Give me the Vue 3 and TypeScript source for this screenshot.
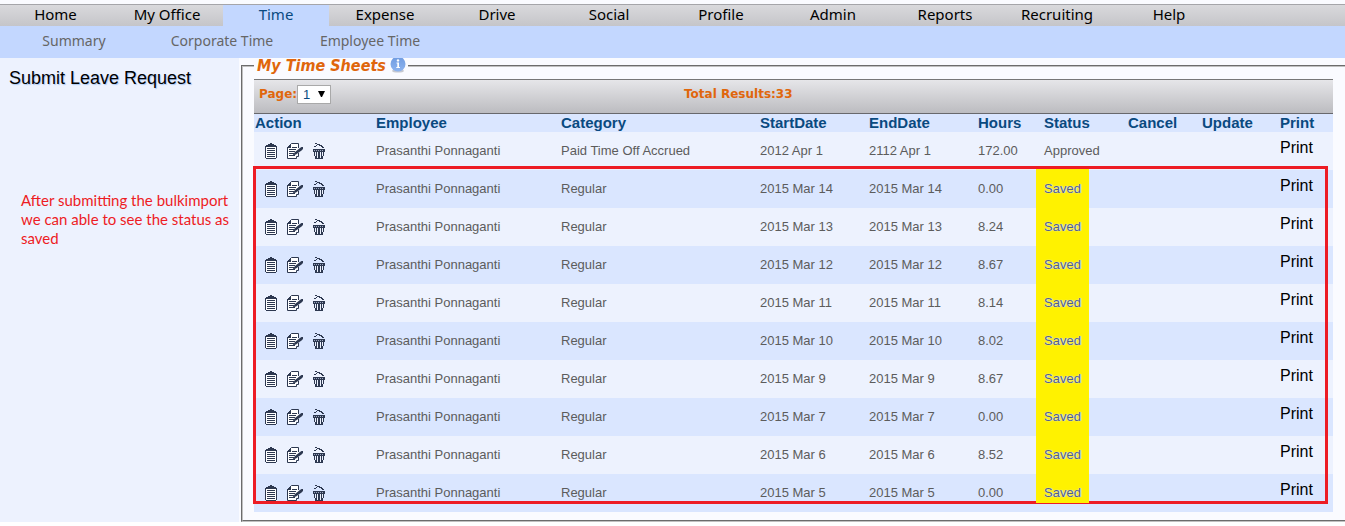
<script setup lang="ts">
import { ref } from 'vue'

interface TimeSheet {
  employee: string
  category: string
  start: string
  end: string
  hours: string
  status: string
}

const modules: string[] = [
  'Home', 'My Office', 'Time', 'Expense', 'Drive', 'Social',
  'Profile', 'Admin', 'Reports', 'Recruiting', 'Help',
]
const sections: string[] = ['Summary', 'Corporate Time', 'Employee Time']
const headings: string[] = [
  'Action', 'Employee', 'Category', 'StartDate', 'EndDate',
  'Hours', 'Status', 'Cancel', 'Update', 'Print',
]

const saved: [string, string][] = [
  ['14', '0.00'], ['13', '8.24'], ['12', '8.67'], ['11', '8.14'], ['10', '8.02'],
  ['9', '8.67'], ['7', '0.00'], ['6', '8.52'], ['5', '0.00'],
]

const employee = 'Prasanthi Ponnaganti'
const rows: TimeSheet[] = [
  { employee, category: 'Paid Time Off Accrued', start: '2012 Apr 1', end: '2112 Apr 1', hours: '172.00', status: 'Approved' },
  ...saved.map(([day, hours]) => ({
    employee,
    category: 'Regular',
    start: `2015 Mar ${day}`,
    end: `2015 Mar ${day}`,
    hours,
    status: 'Saved',
  })),
]

const page = ref('1')
</script>

<template>
  <div class="screen">
    <nav class="modules" aria-label="Modules">
      <a v-for="m in modules" :key="m" href="#" :class="{ active: m === 'Time' }">{{ m }}</a>
    </nav>
    <nav class="sections" aria-label="Time">
      <a v-for="s in sections" :key="s" href="#">{{ s }}</a>
    </nav>

    <div class="body">
      <aside class="sidebar">
        <a class="leave" href="#">Submit Leave Request</a>
        <p class="note">After submitting the bulkimport we can able to see the status as saved</p>
      </aside>

      <main class="content">
        <fieldset class="panel">
          <legend>
            My Time Sheets
            <svg class="info" viewBox="0 0 16 16" aria-hidden="true">
              <defs>
                <linearGradient id="info-fill" x1="0" y1="0" x2="0" y2="1">
                  <stop offset="0" stop-color="#6f9be0" />
                  <stop offset="1" stop-color="#8db4f0" />
                </linearGradient>
              </defs>
              <ellipse cx="8" cy="13" rx="6" ry="1.6" fill="#c5c8d0" />
              <circle cx="8" cy="6" r="7.5" fill="url(#info-fill)" />
              <circle cx="8" cy="2.4" r="1.2" fill="#fff" />
              <path d="M6.5 4.5H9V9h1v1H6.3V9h1V5.5h-.8z" fill="#fff" />
            </svg>
          </legend>

          <div class="toolbar">
            <div class="pager">
              <label for="page">Page:</label>
              <span class="picker">
                <select id="page" v-model="page">
                  <option>1</option>
                  <option>2</option>
                  <option>3</option>
                  <option>4</option>
                </select>
                <svg viewBox="0 0 7 6" aria-hidden="true"><path d="M0 0H7L4 6H3z" fill="#000" /></svg>
              </span>
            </div>
            <div>Total Results:33</div>
          </div>

          <div class="sheets">
            <table>
              <colgroup>
                <col class="w-action"><col class="w-employee"><col class="w-category">
                <col class="w-start"><col class="w-end"><col class="w-hours">
                <col class="w-status"><col class="w-cancel"><col class="w-update"><col>
              </colgroup>
              <thead>
                <tr><th v-for="h in headings" :key="h" scope="col">{{ h }}</th></tr>
              </thead>
              <tbody>
                <tr v-for="(r, i) in rows" :key="i">
                  <td>
                    <div class="actions">
                      <button type="button" aria-label="View">
                        <svg width="12" height="16" viewBox="0 0 12 16" shape-rendering="crispEdges">
                          <path d="M1 2h10v1h1v12h-1v1H1v-1H0V3h1z" fill="#2d3850" />
                          <path d="M1 4h10v11H1z" fill="#fff" />
                          <path d="M5 0h2v1h2v1h1v2H2V2h1V1h2z" fill="#2d3850" />
                          <path d="M2 5h8v1H2zM2 7h8v1H2zM2 9h8v1H2zM2 11h8v1H2zM2 13h8v1H2z" fill="#2d3850" />
                        </svg>
                      </button>
                      <button type="button" aria-label="Edit">
                        <svg width="16" height="16" viewBox="0 0 16 16">
                          <path d="M4.500 .5h7v12h-2v3h-9v-11z" fill="#fff" />
                          <path d="M11.500 5V.5h-7l-4 4v11h9v-2h2V10" fill="none" stroke="#2d3850" />
                          <path d="M3 1h1v4H0V4h1V3h1V2h1z" fill="#2d3850" />
                          <path d="M5 4.500h5M2 6.500h7M2 8.500h6M2 10.500h5M2 12.500h6" fill="none" stroke="#2d3850" />
                          <path d="M5.500 12.500L8 9l5-4 1.500-1H16v2l-1.500 1.500L9 11.500z" fill="#2d3850" />
                        </svg>
                      </button>
                      <button type="button" aria-label="Delete">
                        <svg width="12" height="16" viewBox="0 0 12 16" shape-rendering="crispEdges">
                          <path d="M2 0h2v1H2zM4 1h3v1H4zM6 2h3v1H6zM8 3h2v1H8zM9 4h2v1H9zM1 3h2v1H1zM3 2h1v1H3z" fill="#2d3850" />
                          <path d="M0 6h12v3h-1v4h-1v3H2v-3H1V9H0z" fill="#2d3850" />
                          <path d="M1 7h1v1H1zM3 7h1v1H3zM5 7h1v1H5zM7 7h1v1H7zM9 7h1v1H9z" fill="#9aa5be" />
                          <path d="M2 9h1v4H2zM4 9h1v6H4zM7 9h1v6H7zM9 9h1v4H9z" fill="#edf2fe" />
                        </svg>
                      </button>
                    </div>
                  </td>
                  <td>{{ r.employee }}</td>
                  <td>{{ r.category }}</td>
                  <td>{{ r.start }}</td>
                  <td>{{ r.end }}</td>
                  <td>{{ r.hours }}</td>
                  <td>
                    <a v-if="r.status === 'Saved'" href="#" class="saved">{{ r.status }}</a>
                    <template v-else>{{ r.status }}</template>
                  </td>
                  <td></td>
                  <td></td>
                  <td class="print"><a href="#">Print</a></td>
                </tr>
              </tbody>
            </table>
            <div class="outline"></div>
            <div class="marker"></div>
          </div>
        </fieldset>
      </main>
    </div>
  </div>
</template>

<style>
body {
  margin: 0;
  background: #fff;
}
</style>

<style scoped>
.screen {
  padding-top: 4px;
  background: linear-gradient(#fafbff 0 4px, transparent 4px);
  font-family: "Liberation Sans", Arial, sans-serif;
}
a {
  color: inherit;
  text-decoration: none;
}
.modules {
  display: flex;
  box-sizing: border-box;
  height: 22px;
  border-top: 1px solid #a5a5a9;
  background: linear-gradient(#d9d9dc, #c5c5c9);
  font: 15px/18px "Noto Sans", Tahoma, sans-serif;
  color: #000;
}
.modules a {
  width: 112px;
  box-sizing: border-box;
  text-align: center;
}
.modules a:first-child {
  width: 111px;
}
.modules a.active {
  width: 106px;
  background: #c3d7ff;
  color: #0a4a80;
}
.sections {
  display: flex;
  height: 32px;
  background: #c3d7ff;
  font: 14px/30px "Noto Sans", Tahoma, sans-serif;
  color: #666;
}
.sections a {
  width: 148px;
  text-align: center;
}
.body {
  display: flex;
}
.sidebar {
  flex: 0 0 239px;
  box-sizing: border-box;
  padding: 10px 0 0 9px;
  background: #edf2fe;
}
.leave {
  display: block;
  font-size: 18px;
  line-height: 20px;
  color: #000;
  text-shadow: 1px 1px 1px #a9c8f4;
}
.note {
  width: 214px;
  margin: 103px 0 0 12px;
  font: 15px/19px Lato, Calibri, sans-serif;
  color: #ed1c24;
}
.content {
  flex: 1;
  min-width: 0;
  padding-left: 2px;
  background: #fafbff;
}
.panel {
  min-width: 0;
  margin: 0;
  padding: 5px 12px 8px 11px;
  border: 2px groove #c0c0c0;
  border-right: 0;
}
legend {
  display: flex;
  gap: 4px;
  height: 16px;
  padding: 0 2px 0 3px;
  font: italic bold 16px/16px "DejaVu Sans Condensed", "DejaVu Sans", Tahoma, sans-serif;
  color: #e0660c;
}
.info {
  width: 16px;
  height: 16px;
}
.toolbar {
  display: grid;
  grid-template-columns: 425px 1fr;
  box-sizing: border-box;
  height: 35px;
  padding: 5px;
  border-top: 1px solid #777;
  border-bottom: 1px solid #68686c;
  background: linear-gradient(#e6e6e9, #bcbcc0);
  font: bold 12px/18px "DejaVu Sans", Verdana, sans-serif;
  color: #e0660c;
}
.pager {
  display: flex;
}
.picker {
  position: relative;
  height: 19px;
}
.picker select {
  appearance: none;
  box-sizing: border-box;
  width: 34px;
  height: 19px;
  margin: 0;
  padding: 0 0 0 5px;
  border: 1px solid #a9a9a9;
  border-radius: 0;
  background: #fff;
  font: 13px/17px "Liberation Sans", Arial, sans-serif;
  color: #0a4a80;
}
.picker svg {
  position: absolute;
  right: 6px;
  top: 6px;
  width: 7px;
  height: 6px;
  pointer-events: none;
}
.sheets {
  position: relative;
}
table {
  width: 100%;
  table-layout: fixed;
  border-collapse: collapse;
  color: #5c5c5c;
  font-size: 13px;
}
.w-action { width: 121px; }
.w-employee { width: 185px; }
.w-category { width: 199px; }
.w-start { width: 109px; }
.w-end { width: 109px; }
.w-hours { width: 66px; }
.w-status { width: 84px; }
.w-cancel { width: 74px; }
.w-update { width: 78px; }
th {
  height: 18px;
  padding: 0 1px;
  background: #dae6ff;
  font-size: 15px;
  line-height: 18px;
  text-align: left;
  color: #0a4a80;
}
td {
  height: 38px;
  padding: 0 1px;
  line-height: 16px;
  white-space: nowrap;
}
tbody tr {
  background: #edf2fe;
}
tbody tr:nth-child(even) {
  background: #dae6ff;
}
.actions {
  display: flex;
  gap: 10px;
  padding-left: 10px;
}
.actions button {
  display: block;
  padding: 0;
  border: 0;
  background: none;
}
.actions svg {
  display: block;
}
.saved {
  position: relative;
  z-index: 2;
  color: #55607c;
  text-shadow: 0 0 1px #dae6ff, 1px 0 1px #dae6ff;
}
.print {
  padding-bottom: 7px;
  height: 31px;
  font-size: 16px;
  color: #000;
}
.outline {
  position: absolute;
  inset: 52px 5px 8px -1px;
  border: 3px solid #ed1c24;
  pointer-events: none;
}
.marker {
  position: absolute;
  left: 782px;
  top: 55px;
  bottom: 9px;
  width: 53px;
  background: #fff200;
  pointer-events: none;
}
</style>
